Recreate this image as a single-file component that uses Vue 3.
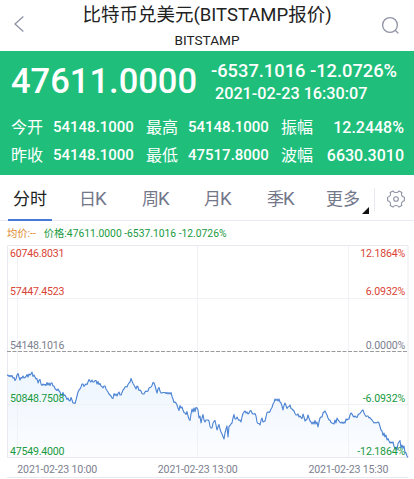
<script setup>
const stats = [
  { label: '今开', value: '54148.1000' },
  { label: '最高', value: '54148.1000' },
  { label: '振幅', value: '12.2448%', wide: true },
  { label: '昨收', value: '54148.1000' },
  { label: '最低', value: '47517.8000' },
  { label: '波幅', value: '6630.3010', wide: true },
]
const tabs = [
  { text: '分时' },
  { text: '日', unit: 'K' },
  { text: '周', unit: 'K' },
  { text: '月', unit: 'K' },
  { text: '季', unit: 'K' },
  { text: '更多' },
]

const levels = [
  { y: 15.3, price: '60746.8031', pct: '12.1864%', w: 45, tone: 'up' },
  { y: 53.2, price: '57447.4523', pct: '6.0932%', w: 39.5, tone: 'up' },
  { y: 106.5, price: '54148.1016', pct: '0.0000%', w: 39.5, tone: 'flat' },
  { y: 159.8, price: '50848.7508', pct: '-6.0932%', w: 42.5, tone: 'down' },
  { y: 212.8, price: '47549.4000', pct: '-12.1864%', w: 48, tone: 'down' },
]
const times = [
  { x: 17.3, text: '2021-02-23 10:00' },
  { x: 157.8, text: '2021-02-23 13:00' },
  { x: 308.4, text: '2021-02-23 15:30' },
]

// Price samples as x,y pairs in chart coordinates
const line =
  '7,133.5 8,133 9,134.5 10,133.5 11,134.5 12,133.5 13,136 14,135.5 15,138.5 16,137 17,133 18,131.5 19,135 20,138 21,135.5 22,136 23,134 24,136 25,135.5 26,134.5 27,132.5 28,135 29,132 30,133 31,132 32,130 33,134.5 34,133 35,135 36,137 37,136.5 38,141 39,138.5 40,137.5 41,142 42,143.5 43,142 44,143 45,142.5 46,143.5 47,140.5 48,143 49,141 50,143.5 51,141 52,141 53,144 54,144 55,146.5 56,147.5 57,148.5 58,147 59,149 60,150 61,153 62,153.5 63,150.5 64,153.5 65,153 66,155 67,157.5 68,156 69,158.5 70,159 71,155.5 72,158 73,161 74,161 75,161.5 76,158 77,154 78,150 79,148 80,147 81,145 82,142 83,142 84,144.5 85,143 86,142 87,142.5 88,140 89,137.5 90,139 91,140 92,138 93,140 94,140 95,138.5 96,138.5 97,142 98,139.5 99,142.5 100,141.5 101,144 102,144.5 103,146 104,144 105,144 106,147 107,148.5 108,150 109,152 110,153 111,154 112,156 113,156.5 114,151.5 115,153.5 116,152 117,154 118,151.5 119,150 120,153 121,153 122,150.5 123,148 124,147 125,145 126,144.5 127,145 128,142.5 129,141 130,140 131,136.5 132,139 133,141.5 134,143 135,145 136,147 137,144 138,145 139,148.5 140,148 141,149 142,151.5 143,152 144,152 145,150 146,149 147,149.5 148,149 149,146 150,145.5 151,145 152,143.5 153,140.5 154,141 155,143.5 156,147.5 157,151 158,147 159,145.5 160,149 161,151 162,151 163,150.5 164,150.5 165,150.5 166,151.5 167,150.5 168,152 169,150.5 170,152 171,150.5 172,154.5 173,157 174,160.5 175,160 176,161 177,163 178,166 179,168.5 180,163.5 181,166 182,165 183,168 184,170.5 185,171 186,172.5 187,169.5 188,174 189,177 190,178.5 191,172 192,167 193,170 194,166 195,169.5 196,165.5 197,166 198,168 199,176 200,174 201,181 202,176 203,172.5 204,178 205,180 206,178 207,178 208,178 209,179 210,184.5 211,186 212,186 213,181 214,179.5 215,178.5 216,183 217,188 218,185 219,182.5 220,187 221,190 222,192 223,194.5 224,197 225,191 226,187 227,184 228,195 229,184.5 230,183.5 231,182 232,181 233,176 234,172.5 235,177 236,177 237,175 238,177 239,178.5 240,178 241,180 242,175 243,171.5 244,170 245,169 246,171 247,170 248,172 249,171 250,169 251,168.5 252,171 253,172 254,172 255,171.5 256,174 257,180 258,181.5 259,181.5 260,183 261,178.5 262,176 263,180 264,179.5 265,179 266,175 267,170.5 268,170 269,170.5 270,169.5 271,167 272,165.5 273,162 274,160.5 275,157 276,158.5 277,157 278,159 279,157 280,160 281,161 282,164 283,168 284,163.5 285,161 286,163.5 287,166.5 288,165 289,164.5 290,163 291,166.5 292,167 293,168 294,169 295,171.5 296,173 297,173 298,172 299,175 300,174 301,175.5 302,176.5 303,172 304,175 305,179 306,178 307,177 308,173 309,176 310,179 311,180 312,182 313,180 314,182 315,178.5 316,182 317,180 318,185 319,180 320,176 321,175 322,175 323,171 324,170 325,169 326,171 327,173 328,176 329,178 330,178 331,180.5 332,181 333,181.5 334,182 335,178 336,181 337,176 338,178 339,179 340,180.5 341,181 342,180 343,181.5 344,180 345,181 346,177 347,178 348,177 349,177 350,173 351,171 352,172 353,174 354,175 355,174 356,175 357,175.5 358,173 359,172 360,171.5 361,170 362,168.5 363,168 364,171 365,173 366,174.5 367,174 368,174 369,176 370,175.5 371,177 372,178 373,179.5 374,181 375,180.5 376,181 377,180.5 378,180 379,181 380,184.5 381,188 382,189 383,193.5 384,191 385,195 386,193 387,198 388,196.5 389,199 390,201 391,200 392,201 393,200 394,204 395,207 396,205 397,208 398,201.5 399,200 400,198.5 401,206 402,203 403,206 404,204 405,210 406,211 407,214 408,215.5'
const area = `7,215.5 ${line} 408,215.5`
</script>

<template>
  <div class="page">
    <header class="top">
      <svg class="back" viewBox="0 0 12 18"><path d="M10.3 1.5 2 9l8.3 7.5" /></svg>
      <div class="heading">
        <h1>比特币兑美元(BITSTAMP报价)</h1>
        <p>BITSTAMP</p>
      </div>
      <svg class="search" viewBox="0 0 20 20">
        <circle cx="9" cy="9" r="7.4" /><path d="m14.2 14.2 3.2 3.2" />
      </svg>
    </header>

    <section class="quote">
      <div class="main">
        <strong>47611.0000</strong>
        <div class="delta">
          <span class="change">-6537.1016 -12.0726%</span>
          <span class="date">2021-02-23 16:30:07</span>
        </div>
      </div>
      <div class="stats">
        <template v-for="s in stats" :key="s.label">
          <span class="label">{{ s.label }}</span>
          <span class="value" :class="{ wide: s.wide }">{{ s.value }}</span>
        </template>
      </div>
    </section>

    <nav class="tabs">
      <div v-for="(t, i) in tabs" :key="t.text" class="tab" :class="{ active: i === 0, more: i === 5 }">
        <span>{{ t.text }}</span>
        <span v-if="t.unit" class="unit">{{ t.unit }}</span>
        <svg v-if="i === 5" class="corner" viewBox="0 0 7 7"><path d="M7 0v7H0z" /></svg>
      </div>
      <div class="settings">
        <svg viewBox="0 0 18 18">
          <path d="M6 .9Q6.9 2.5 9 2.5T12 .9L14.9 2.5Q14 4.3 14.8 5.6T17.4 7.2V10.8Q15.6 11 14.8 12.4T14.9 15.5L12 17.1Q11.1 15.5 9 15.5T6 17.1L3.1 15.5Q4 13.8 3.2 12.4T.6 10.8V7.2Q2.4 7 3.2 5.6T3.1 2.5Z" />
          <circle cx="9" cy="9" r="2.3" />
        </svg>
      </div>
    </nav>

    <div class="legend">
      <span class="avg">均价:--</span>
      <span class="now">价格:47611.0000 -6537.1016 -12.0726%</span>
    </div>

    <svg class="chart" viewBox="0 0 414 237">
      <defs>
        <linearGradient id="fade" x1="0" y1="0" x2="0" y2="1">
          <stop offset="0" stop-color="#edf5fe" />
          <stop offset="1" stop-color="#fcfdff" />
        </linearGradient>
      </defs>
      <polygon :points="area" fill="url(#fade)" />
      <path class="grid" d="M17.5 3v212M197.5 3v212M348.5 3v212M7 56.5h401M7 162.5h401" />
      <path class="frame" d="M7.5 3.5h400.5v212H7.5zM7 235.5h401" />
      <path class="zero" d="M7 109.5h401" />
      <polyline class="price" :points="line" />
      <g v-for="l in levels" :key="l.price" :class="l.tone">
        <text x="10" :y="l.y" textLength="54.5">{{ l.price }}</text>
        <text :x="405.3 - l.w" :y="l.y" :textLength="l.w">{{ l.pct }}</text>
      </g>
      <text v-for="t in times" :key="t.x" class="flat" :x="t.x" y="230.5" textLength="80">{{ t.text }}</text>
    </svg>
  </div>
</template>

<style>
body {
  margin: 0;
  background: #fff;
}
</style>

<style scoped>
.page {
  width: 414px;
  height: 479px;
  overflow: hidden;
  background: #fff;
  font-family: Roboto, 'Noto Sans CJK SC', sans-serif;
}
.top {
  display: flex;
  justify-content: space-between;
  height: 51px;
  padding: 0 13px;
  box-sizing: border-box;
}
.top svg,
.settings svg {
  fill: none;
  stroke: #8f92a3;
  stroke-width: 1.3;
}
.back {
  width: 12px;
  height: 18px;
  margin-top: 15px;
}
.search {
  width: 20px;
  height: 20px;
  margin: 16px 0 0;
}
.heading {
  text-align: center;
  color: #222;
}
h1 {
  margin: 2px 0 0 8px;
  font-size: 18.5px;
  font-weight: 400;
  line-height: 26px;
  white-space: nowrap;
}
p {
  margin: 4px 0 0 8px;
  font-size: 13.6px;
  line-height: 16px;
}
.quote {
  height: 124px;
  background: #1fbf7b;
  color: #fff;
  font-weight: 500;
}
.main {
  display: flex;
  height: 62px;
  padding-left: 11px;
}
strong {
  width: 200px;
  padding-top: 10px;
  font-size: 34.5px;
  font-weight: 500;
  line-height: 40px;
}
.delta {
  display: flex;
  flex-direction: column;
  white-space: nowrap;
}
.change {
  padding-top: 9px;
  font-size: 18.3px;
  line-height: 22px;
}
.date {
  padding: 2px 0 0 4px;
  font-size: 16.2px;
  line-height: 19px;
}
.stats {
  display: grid;
  grid-template-columns: 42px 93px 42px 93px 34px 89px;
  grid-auto-rows: 28px;
  padding-left: 11px;
  line-height: 29px;
}
.label {
  font-size: 16px;
  font-weight: 400;
}
.value {
  font-size: 15px;
}
.wide {
  font-size: 16px;
  text-align: right;
}
.tabs {
  display: grid;
  grid-template-columns: 44px 63px 62px 63px 62px 72px 40px;
  height: 46px;
  padding-left: 8px;
  box-sizing: border-box;
  border-bottom: 1px solid #e9eaf3;
  color: #73778a;
  font-size: 17px;
}
.tab {
  display: flex;
  line-height: 48px;
  padding-left: 27px;
}
.unit {
  margin-left: -1px;
  font-size: 18.5px;
}
.tab.active {
  padding: 0;
  justify-content: center;
  color: #222;
  border-bottom: 2px solid #477bd5;
  height: 44px;
}
.tab.more {
  padding-left: 24px;
}
.corner {
  width: 7px;
  height: 7px;
  margin: 32px 0 0 2px;
  fill: #111;
}
.settings {
  align-self: center;
  display: flex;
  align-items: center;
  justify-content: center;
  height: 23px;
  padding-left: 2px;
  border-left: 1px solid #e7e8f0;
}
.settings svg {
  width: 18px;
  height: 18px;
  stroke-width: 1.1;
  stroke-linejoin: round;
}
.legend {
  display: flex;
  gap: 8px;
  height: 21px;
  padding-left: 7px;
  font-size: 10.3px;
  line-height: 26px;
  white-space: nowrap;
}
.avg {
  color: #e08a2c;
}
.now,
.down {
  color: #189a41;
  fill: #189a41;
}
.chart {
  display: block;
  width: 414px;
  height: 237px;
  font-size: 10.6px;
}
.up {
  fill: #d94336;
}
.flat {
  fill: #7d808f;
}
.grid,
.frame,
.zero,
.price {
  fill: none;
}
.grid {
  stroke: #f1f2f6;
}
.frame {
  stroke: #e9eaf0;
}
.zero {
  stroke: #9b9b9f;
  stroke-dasharray: 4 1.5;
}
.price {
  stroke: #4b83d3;
  stroke-width: 1.1;
  stroke-linejoin: round;
}
</style>
